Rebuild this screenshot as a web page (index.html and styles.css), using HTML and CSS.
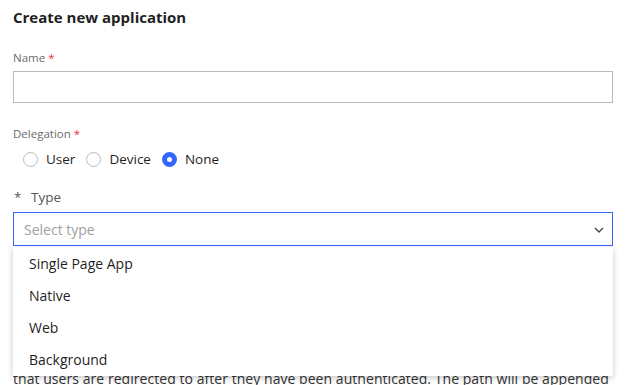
FILE: index.html
```html
<!DOCTYPE html>
<html lang="en">
<head>
<meta charset="utf-8">
<title>Create new application</title>
<link rel="stylesheet" href="styles.css">
</head>
<body>
<div class="page">
  <h1 class="title">Create new application</h1>

  <div class="field field-name">
    <label class="label">Name <span class="req">*</span></label>
    <div class="input"></div>
  </div>

  <div class="field field-deleg">
    <label class="label">Delegation <span class="req">*</span></label>
    <div class="radios">
      <span class="radio"><span class="circle"></span>User</span>
      <span class="radio"><span class="circle"></span>Device</span>
      <span class="radio"><span class="circle checked"></span>None</span>
    </div>
  </div>

  <div class="field field-type">
    <div class="type-label"><span class="star">*</span>Type</div>
    <div class="select-wrap">
      <div class="select">
        <span class="placeholder">Select type</span>
        <svg class="chevron" width="10" height="6" viewBox="0 0 10 6"><path d="M1 1 L5 5 L9 1" fill="none" stroke="#464646" stroke-width="1.4"/></svg>
      </div>
      <ul class="menu">
        <li class="menu-item">Single Page App</li>
        <li class="menu-item">Native</li>
        <li class="menu-item">Web</li>
        <li class="menu-item">Background</li>
      </ul>
    </div>
  </div>

  <p class="desc">that users are redirected to after they have been authenticated. The path will be appended</p>
</div>
</body>
</html>
```

FILE: styles.css
```css
* { box-sizing: border-box; }
html, body { margin: 0; padding: 0; background: #ffffff; }
body {
  font-family: "Open Sans", "Noto Sans", "Liberation Sans", sans-serif;
  color: #1f1f1f;
}
.page {
  padding: 7px 12px 0 13px;
  width: 625px;
  height: 385px;
  overflow: hidden;
}
.title {
  margin: 0;
  font-size: 15px;
  line-height: 20px;
  font-weight: 700;
  color: #1f1f1f;
}
.field { display: flex; flex-direction: column; }
.field-name { margin-top: 23px; }
.label {
  font-size: 11.5px;
  line-height: 16px;
  color: #6b6b6b;
}
.req { color: #f03040; }
.input {
  margin-top: 5px;
  height: 32px;
  border: 1px solid #bababa;
  background: #fff;
}
.field-deleg { margin-top: 23px; }
.radios {
  display: flex;
  align-items: center;
  gap: 11px;
  height: 22px;
  margin-top: 6px;
  padding-left: 10px;
  font-size: 13.5px;
  color: #1f1f1f;
}
.radio { display: flex; align-items: center; gap: 8px; }
.circle {
  width: 15px;
  height: 15px;
  border-radius: 50%;
  border: 1.5px solid #bababa;
  background: #fff;
}
.circle.checked {
  border: 5px solid #3366ff;
  background: #fff;
}
.field-type { margin-top: 18px; }
.type-label {
  font-size: 13.5px;
  line-height: 18px;
  color: #555555;
  display: flex;
}
.star { width: 18px; padding-left: 1px; }
.select-wrap { position: relative; margin-top: 6px; }
.select {
  height: 34px;
  border: 1px solid #3366ff;
  display: flex;
  align-items: center;
  justify-content: space-between;
  padding: 0 8px 0 10px;
  background: #fff;
}
.placeholder { font-size: 14px; color: #a0a0a0; }
.chevron { margin-top: 2px; }
.menu {
  position: absolute;
  left: 0;
  right: 0;
  top: 35px;
  margin: 0;
  padding: 1px 0 0;
  list-style: none;
  background: #fff;
  box-shadow: 0 2px 6px rgba(0,0,0,0.22);
  z-index: 5;
}
.menu-item {
  height: 32px;
  line-height: 32px;
  padding-left: 16px;
  font-size: 14px;
  color: #1f1f1f;
}
.desc {
  margin: 123px 0 0;
  font-size: 14px;
  line-height: 20px;
  color: #333333;
  white-space: nowrap;
  overflow: hidden;
  letter-spacing: 0.05px;
}
```
